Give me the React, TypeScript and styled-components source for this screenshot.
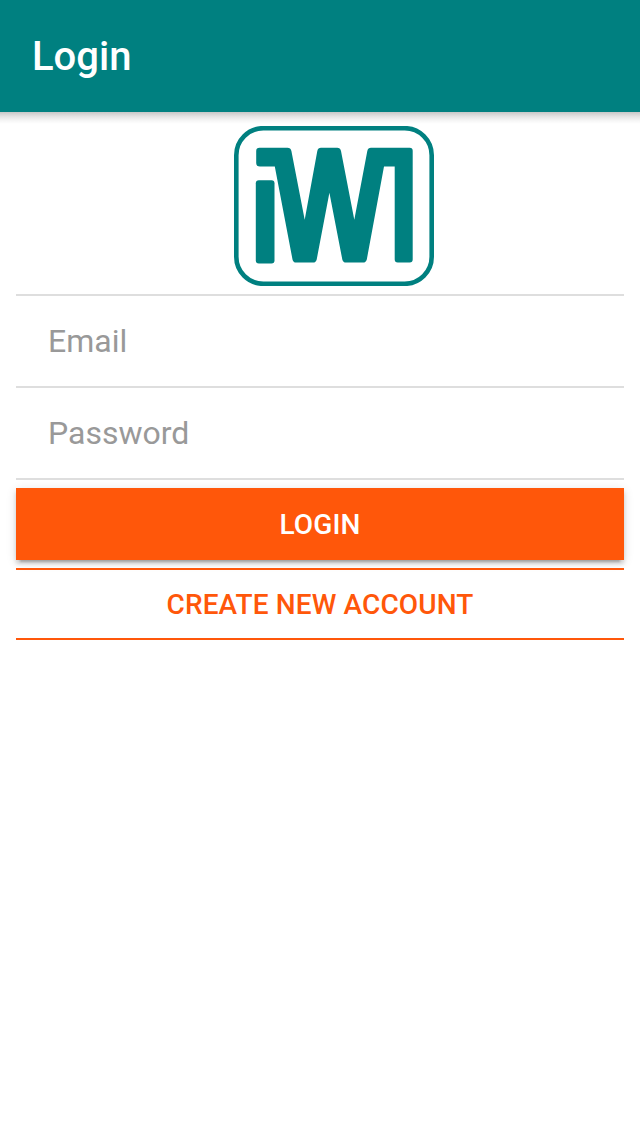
import React from "react";
import styled, { createGlobalStyle } from "styled-components";

const teal = "#008080";
const orange = "#ff570a";

const GlobalStyle = createGlobalStyle`
  *, *::before, *::after { box-sizing: border-box; }
  body { margin: 0; background: #fff; font-family: Roboto, sans-serif; }
`;

const Screen = styled.div`
  display: flex;
  flex-direction: column;
  min-height: 1136px;
  background: #fff;
`;

const Toolbar = styled.header`
  position: relative;
  display: flex;
  align-items: center;
  height: 112px;
  padding: 2px 32px 0;
  background: ${teal};
  &::after {
    content: "";
    position: absolute;
    top: 100%;
    left: 0;
    right: 0;
    height: 12px;
    background: linear-gradient(rgba(0, 0, 0, 0.22), rgba(0, 0, 0, 0.1) 40%, rgba(0, 0, 0, 0.03) 75%, transparent);
  }
`;

const Title = styled.h1`
  margin: 0;
  font-size: 40px;
  line-height: 48px;
  font-weight: 500;
  color: #fff;
`;

const Content = styled.main`
  display: flex;
  flex-direction: column;
  padding: 14px 16px 16px;
`;

const Logo = styled.svg`
  display: block;
  width: 200px;
  height: 160px;
  margin: 0 0 8px 218px;
`;

const Fields = styled.div`
  border-top: 2px solid #dedede;
`;

const Field = styled.input`
  display: block;
  width: 100%;
  height: 92px;
  margin: 0;
  padding: 0 32px;
  border: 0;
  border-bottom: 2px solid #dedede;
  border-radius: 0;
  outline: 0;
  background: transparent;
  font: 400 32px Roboto, sans-serif;
  color: #222;
  &::placeholder { color: #999; opacity: 1; }
`;

const Button = styled.button<{ $outline?: boolean }>`
  height: 72px;
  margin: 8px 0 0;
  padding: 0;
  border: solid ${orange};
  border-width: ${(p) => (p.$outline ? "2px 0" : "0")};
  border-radius: 0;
  background: ${(p) => (p.$outline ? "transparent" : orange)};
  color: ${(p) => (p.$outline ? orange : "#fff")};
  box-shadow: ${(p) =>
    p.$outline
      ? "none"
      : "0 4px 4px rgba(0,0,0,.14), 0 6px 2px -4px rgba(0,0,0,.2), 0 2px 10px rgba(0,0,0,.12)"};
  font: 500 28px Roboto, sans-serif;
  letter-spacing: 0.12px;
  text-transform: uppercase;
`;

export default function App() {
  return (
    <Screen>
      <GlobalStyle />
      <Toolbar>
        <Title>Login</Title>
      </Toolbar>
      <Content>
        <Logo viewBox="0 0 200 160" aria-hidden="true">
          <rect x="2.3" y="2.2" width="195.4" height="155.6" rx="27" fill="none" stroke={teal} strokeWidth="4.6" />
          <rect x="21.8" y="54.2" width="18.7" height="83.2" rx="3" fill={teal} />
          <path
            fill={teal}
            d="M25.5 21.7H53.5Q56.6 21.7 57.4 25L70.7 93.7L83.3 25Q84 21.7 87 21.7H103.2Q106.2 21.7 107 25L120.3 93.7L133.3 25Q134 21.7 137 21.7H175.7Q178.7 21.7 178.7 24.7V133.4Q178.7 136.4 175.7 136.4H163.7Q160.7 136.4 160.7 133.4V40.6H150L132.8 133.5Q132 136.6 129 136.6H112Q109 136.6 108.3 133.5L95.4 66.7L82.7 133.5Q82 136.6 79 136.6H62Q59.2 136.6 58.5 133.5L40.8 40.6H26Q22.2 40.6 22.2 37V25Q22.2 21.7 25.5 21.7Z"
          />
        </Logo>
        <Fields>
          <Field type="email" placeholder="Email" aria-label="Email" />
          <Field type="password" placeholder="Password" aria-label="Password" />
        </Fields>
        <Button>Login</Button>
        <Button $outline>Create new account</Button>
      </Content>
    </Screen>
  );
}
